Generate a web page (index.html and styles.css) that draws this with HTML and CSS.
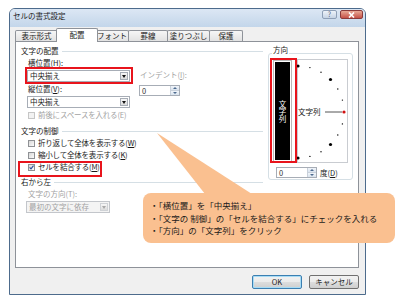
FILE: index.html
```html
<!DOCTYPE html>
<html lang="ja">
<head>
<meta charset="utf-8">
<title>セルの書式設定</title>
<link rel="stylesheet" href="styles.css">
</head>
<body>
<div class="dialog">
  <div class="titlebar">
    <span class="title">セルの書式設定</span>
    <div class="caption">
      <span class="cbtn help">?</span>
      <span class="cbtn close"><svg width="7" height="6" viewBox="0 0 7 6"><path d="M1 0.5 L6 5.5 M6 0.5 L1 5.5" stroke="#fff" stroke-width="1.6"/></svg></span>
    </div>
  </div>
  <div class="tabs">
    <span class="tab t-num">表示形式</span>
    <span class="tab t-align active">配置</span>
    <span class="tab t-font">フォント</span>
    <span class="tab t-border">罫線</span>
    <span class="tab t-fill">塗りつぶし</span>
    <span class="tab t-protect">保護</span>
  </div>
  <div class="panel">
    <div class="left">
      <div class="sect">文字の配置</div>
      <div class="align">
        <div class="acol">
          <div class="lbl">横位置(<u>H</u>):</div>
          <div class="combo"><span class="val">中央揃え</span><b class="arrow"></b></div>
          <div class="lbl gap1">縦位置(<u>V</u>):</div>
          <div class="combo"><span class="val">中央揃え</span><b class="arrow"></b></div>
        </div>
        <div class="icol">
          <div class="lbl dis">インデント(<u>I</u>):</div>
          <div class="spin"><span class="val">0</span><span class="ud"><i class="up"></i><i class="down"></i></span></div>
        </div>
      </div>
      <div class="check dis gap1"><i class="box"></i>前後にスペースを入れる(E)</div>
      <div class="sect gap4">文字の制御</div>
      <div class="check"><i class="box"></i>折り返して全体を表示する(<u>W</u>)</div>
      <div class="check"><i class="box"></i>縮小して全体を表示する(<u>K</u>)</div>
      <div class="check"><i class="box checked"><svg width="5" height="5" viewBox="0 0 5 5"><path d="M0.6 2.4 L2 3.9 L4.5 0.6" fill="none" stroke="#2a4d9b" stroke-width="1.1"/></svg></i>セルを結合する(<u>M</u>)</div>
      <div class="sect gap3">右から左</div>
      <div class="lbl dis sub">文字の方向(T):</div>
      <div class="combo small dis"><span class="val">最初の文字に依存</span><b class="arrow"></b></div>
    </div>
    <div class="dir">
      <span class="dir-title">方向</span>
      <div class="dir-body">
        <div class="vbtn"><div class="bar">文字列</div></div>
        <div class="dial">
          <svg width="52" height="104" viewBox="0 0 52 104">
            <circle cx="1" cy="7" r="1.6" fill="#000"/>
            <circle cx="12.9" cy="8.6" r="0.7" fill="#000"/>
            <circle cx="24" cy="13.2" r="0.7" fill="#000"/>
            <circle cx="33.5" cy="20.5" r="1.6" fill="#000"/>
            <circle cx="40.8" cy="30" r="0.7" fill="#000"/>
            <circle cx="45.4" cy="41.1" r="0.7" fill="#000"/>
            <circle cx="47" cy="53" r="1.6" fill="#d01010"/>
            <circle cx="45.4" cy="64.9" r="0.7" fill="#000"/>
            <circle cx="40.8" cy="76" r="0.7" fill="#000"/>
            <circle cx="33.5" cy="85.5" r="1.6" fill="#000"/>
            <circle cx="24" cy="92.8" r="0.7" fill="#000"/>
            <circle cx="12.9" cy="97.4" r="0.7" fill="#000"/>
            <circle cx="1" cy="99" r="1.6" fill="#000"/>
            <line x1="28" y1="53" x2="45" y2="53" stroke="#555" stroke-width="1"/>
            <text x="1" y="56" class="dial-text">文字列</text>
          </svg>
        </div>
      </div>
      <div class="deg">
        <div class="spin"><span class="val">0</span><span class="ud"><i class="up"></i><i class="down"></i></span></div>
        <span class="deg-lbl">度(<u>D</u>)</span>
      </div>
    </div>
  </div>
  <div class="buttons">
    <button class="btn default">OK</button>
    <button class="btn">キャンセル</button>
  </div>
</div>

<div class="mark m1"></div>
<div class="mark m2"></div>
<div class="mark m3"></div>

<svg class="callout-shape" width="400" height="308" viewBox="0 0 400 308">
  <path d="M151 193 H387 A8 8 0 0 1 395 201 V235 A8 8 0 0 1 387 243 H151 A8 8 0 0 1 143 235 V201 A8 8 0 0 1 151 193 Z" fill="#fac090"/>
  <polygon points="157,133 205,194 252,194" fill="#fac090"/>
</svg>
<div class="callout-text">
  <div>・「横位置」を「中央揃え」</div>
  <div>・「文字の 制御」の「セルを結合する」にチェックを入れる</div>
  <div>・「方向」の「文字列」をクリック</div>
</div>
</body>
</html>
```
FILE: styles.css
```css
* { box-sizing: border-box; }
html, body { margin: 0; }
body {
  width: 400px;
  height: 308px;
  padding: 8px 0 0 9px;
  position: relative;
  overflow: hidden;
  background: #fff;
  font-family: "Noto Sans CJK JP", "Noto Sans", sans-serif;
  font-size: 7.5px;
  color: #1a1a1a;
}
u { text-decoration: underline; text-underline-offset: 1px; }

.dialog {
  width: 357px;
  height: 287px;
  border: 1px solid #4d6b8c;
  border-radius: 6px 6px 0 0;
  background: #f0f0f0;
  display: flex;
  flex-direction: column;
}
.titlebar {
  height: 18px;
  display: flex;
  justify-content: space-between;
  align-items: flex-start;
  padding: 0 2px 0 3px;
  border-radius: 5px 5px 0 0;
  background: linear-gradient(#dce7f4, #c3d6ea);
}
.title { line-height: 13px; }
.caption { display: flex; gap: 3px; margin-top: 1px; }
.cbtn {
  height: 9px;
  border-radius: 2px;
  display: flex;
  align-items: center;
  justify-content: center;
}
.help {
  width: 15px;
  border: 1px solid #8ea0b7;
  background: linear-gradient(#eef3f9, #c6d4e5);
  color: #56657a;
  font-size: 7px;
  line-height: 7px;
}
.close {
  width: 23px;
  border: 1px solid #8b3b3b;
  background: linear-gradient(#e9a996, #c65248);
}

.tabs {
  height: 14px;
  display: flex;
  align-items: flex-end;
  padding-left: 5px;
  position: relative;
  z-index: 1;
}
.tab {
  height: 11px;
  line-height: 10px;
  text-align: center;
  border: 1px solid #8e9299;
  border-bottom: none;
  margin-left: -1px;
  border-radius: 2px 2px 0 0;
  background: linear-gradient(#f6f6f6, #e2e2e2);
}
.tab.active {
  height: 14px;
  margin: 0 -2px -1px -2px;
  line-height: 12px;
  background: #fff;
  position: relative;
}
.t-num { width: 43px; margin-left: 0; }
.t-align { width: 42px; }
.t-font { width: 34px; }
.t-border { width: 40px; }
.t-fill { width: 43px; }
.t-protect { width: 34px; }

.panel {
  height: 227px;
  margin: 0 6px 0 5px;
  border: 1px solid #8e9299;
  background: #fff;
  display: flex;
  gap: 5px;
  padding: 3px 0 0 5px;
}
.left { width: 242px; }
.sect {
  display: flex;
  align-items: center;
  height: 12px;
  line-height: 12px;
}
.sect::after {
  content: "";
  flex: 1;
  height: 1px;
  margin-left: 3px;
  background: #d5dfe5;
}
.gap1 { margin-top: 1px; }
.gap3 { margin-top: 3px; }
.gap4 { margin-top: 4px; }

.align { display: flex; margin-left: 6px; }
.acol { width: 112px; }
.lbl { height: 12px; line-height: 12px; padding-left: 1px; }
.lbl.sub { margin-left: 6px; }
.dis { color: #a3a3a3; }

.combo {
  display: flex;
  align-items: center;
  width: 103px;
  height: 12px;
  margin-top: 1px;
  padding: 0 1px 0 2px;
  border: 1px solid #a7adb6;
  background: #fff;
}
.combo.small { width: 84px; margin-left: 5px; background: #f4f4f4; border-color: #c3c6cb; }
.combo .val { flex: 1; line-height: 10px; white-space: nowrap; }
.arrow {
  width: 8px;
  height: 8px;
  border: 1px solid #a7adb6;
  background: linear-gradient(#f7f7f7, #dcdcdc);
  display: flex;
  align-items: center;
  justify-content: center;
}
.arrow::after {
  content: "";
  border-left: 2.5px solid transparent;
  border-right: 2.5px solid transparent;
  border-top: 3px solid #111;
}
.combo.dis .arrow { border-color: #cfd2d6; }
.combo.dis .arrow::after { border-top-color: #a8a8a8; }

.icol { margin-top: 12px; }
.spin {
  display: flex;
  width: 41px;
  height: 11px;
  margin-top: 4px;
  border: 1px solid #a7adb6;
  background: #fff;
}
.spin .val { flex: 1; line-height: 9px; padding-left: 2px; color: #333; }
.ud { width: 9px; display: flex; flex-direction: column; border-left: 1px solid #c8d0da; }
.ud i {
  flex: 1;
  display: flex;
  align-items: center;
  justify-content: center;
  background: linear-gradient(#f1f5fa, #d9e3ee);
}
.ud .up { border-bottom: 1px solid #c8d0da; }
.ud .up::after {
  content: "";
  border-left: 2px solid transparent;
  border-right: 2px solid transparent;
  border-bottom: 2px solid #4d6a8e;
}
.ud .down::after {
  content: "";
  border-left: 2px solid transparent;
  border-right: 2px solid transparent;
  border-top: 2px solid #4d6a8e;
}

.check {
  display: flex;
  align-items: center;
  height: 12px;
  line-height: 12px;
  margin-left: 7px;
  letter-spacing: -0.2px;
}
.box {
  width: 7px;
  height: 7px;
  margin-right: 3px;
  border: 1px solid #8f9195;
  background: linear-gradient(135deg, #d8d8d8, #fbfbfb);
  display: flex;
}
.check.dis .box { border-color: #c6c6c6; background: #f2f2f2; }

.dir {
  width: 85px;
  height: 127px;
  margin-top: 8px;
  border: 1px solid #d5dfe5;
  border-radius: 3px;
  display: flex;
  flex-direction: column;
}
.dir-title {
  align-self: flex-start;
  height: 12px;
  line-height: 12px;
  margin: -10px 0 0 3px;
  padding: 0 1px;
  background: #fff;
}
.dir-body { display: flex; margin: 3px 0 0 1px; }
.vbtn {
  width: 27px;
  height: 104px;
  padding: 3px 5px 3px 5px;
  background: #fff;
}
.bar {
  height: 100%;
  background: #000;
  color: #fff;
  box-shadow: 0 0 0 1px #fff, 0 0 0 2px #b9b9b9;
  writing-mode: vertical-rl;
  text-orientation: upright;
  display: flex;
  align-items: center;
  justify-content: center;
  line-height: 15px;
  font-size: 7.5px;
}
.dial {
  width: 51px;
  height: 104px;
  border: 1px solid #c9ccd1;
  background: #fff;
}
.dial svg { display: block; overflow: visible; margin: -1px 0 0 -1px; }
.dial-text { font-family: "Noto Sans CJK JP", sans-serif; font-size: 7.5px; fill: #111; }

.deg { display: flex; align-items: center; margin: 0 0 0 7px; }
.deg-lbl { margin-left: 3px; margin-top: 4px; line-height: 11px; }

.buttons {
  display: flex;
  justify-content: flex-end;
  gap: 7px;
  margin: 7px 6px 0 0;
}
.btn {
  width: 50px;
  height: 14px;
  padding: 0;
  border: 1px solid #707070;
  border-radius: 2px;
  font: inherit;
  color: #1a1a1a;
  line-height: 12px;
  background: linear-gradient(#f2f2f2 0%, #ebebeb 50%, #dddddd 51%, #cfcfcf 100%);
}
.btn.default {
  border-color: #3c7fb1;
  box-shadow: inset 0 0 0 1px #a7dcf6;
}

.mark {
  position: absolute;
  border: 2px solid #e8141c;
}
.m1 { left: 25px; top: 67px; width: 108px; height: 17px; }
.m2 { left: 18px; top: 161px; width: 84px; height: 16px; }
.m3 { left: 270px; top: 58px; width: 27px; height: 105px; }

.callout-shape { position: absolute; left: 0; top: 0; }
.callout-text {
  position: absolute;
  left: 150px;
  top: 199px;
  font-size: 8.5px;
  line-height: 12.5px;
  color: #1a1a1a;
  white-space: nowrap;
}
```
